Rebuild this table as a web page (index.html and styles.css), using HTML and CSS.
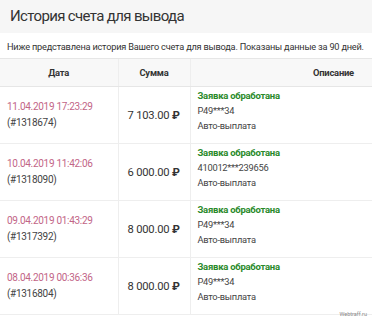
FILE: index.html
```html
<!DOCTYPE html>
<html lang="ru">
<head>
<meta charset="utf-8">
<link rel="stylesheet" href="styles.css">
</head>
<body>
<div class="page">
  <header class="head"><h1 class="title">История счета для вывода</h1></header>
  <p class="lead">Ниже представлена история Вашего счета для вывода. Показаны данные за 90 дней.</p>
  <table class="hist">
    <thead>
      <tr><th class="c-date">Дата</th><th class="c-sum">Сумма</th><th class="c-desc">Описание</th></tr>
    </thead>
    <tbody>
      <tr>
        <td class="c-date"><span class="dt">11.04.2019 17:23:29</span><span class="id">(#1318674)</span></td>
        <td class="c-sum">7 103.00 <span class="rub">₽</span></td>
        <td class="c-desc"><span class="ok">Заявка обработана</span><span class="ln">P49***34</span><span class="ln">Авто-выплата</span></td>
      </tr>
      <tr>
        <td class="c-date"><span class="dt">10.04.2019 11:42:06</span><span class="id">(#1318090)</span></td>
        <td class="c-sum">6 000.00 <span class="rub">₽</span></td>
        <td class="c-desc"><span class="ok">Заявка обработана</span><span class="ln">410012***239656</span><span class="ln">Авто-выплата</span></td>
      </tr>
      <tr>
        <td class="c-date"><span class="dt">09.04.2019 01:43:29</span><span class="id">(#1317392)</span></td>
        <td class="c-sum">8 000.00 <span class="rub">₽</span></td>
        <td class="c-desc"><span class="ok">Заявка обработана</span><span class="ln">P49***34</span><span class="ln">Авто-выплата</span></td>
      </tr>
      <tr>
        <td class="c-date"><span class="dt">08.04.2019 00:36:36</span><span class="id">(#1316804)</span></td>
        <td class="c-sum">8 000.00 <span class="rub">₽</span></td>
        <td class="c-desc"><span class="ok">Заявка обработана</span><span class="ln">P49***34</span><span class="ln">Авто-выплата</span></td>
      </tr>
    </tbody>
  </table>
  <div class="mark">Webtraff.ru</div>
</div>
</body>
</html>
```
FILE: styles.css
```css
* { box-sizing: border-box; }
html, body { margin: 0; padding: 0; background: #fff; }
body {
  font-family: Roboto, "Open Sans", sans-serif;
  color: #333;
  width: 372px;
  height: 320px;
  overflow: hidden;
}
.page { position: relative; height: 320px; }
.head {
  background: #f6f6f6;
  height: 33px;
  padding: 4px 0 0 10px;
}
.title {
  margin: 0;
  font-weight: 400;
  font-size: 15px;
  letter-spacing: -0.65px;
  color: #333;
  line-height: 24px;
}
.lead {
  margin: 0;
  padding: 7px 0 0 7px;
  height: 25px;
  font-size: 9.2px;
  letter-spacing: -0.2px;
  color: #333;
  line-height: 14px;
  white-space: nowrap;
}
.hist {
  width: 100%;
  border-collapse: collapse;
  font-size: 10px;
  letter-spacing: -0.3px;
}
.hist th {
  background: #f8f8f8;
  border-top: 1px solid #e6e6e6;
  border-bottom: 1px solid #e6e6e6;
  height: 28px;
  font-weight: 700;
  font-size: 9.4px;
  letter-spacing: -0.2px;
  color: #333;
  padding: 0;
}
.hist td {
  height: 57px;
  border-bottom: 1px solid #eee;
  padding: 0;
  vertical-align: middle;
}
.hist .c-date { width: 118px; padding-left: 7px; text-align: left; }
.hist th.c-date { text-align: center; padding-left: 0; }
.hist .c-sum { width: 72px; border-left: 1px solid #eee; padding-left: 9px; }
.hist th.c-sum { text-align: center; padding-left: 0; }
.hist .c-desc { border-left: 1px solid #eee; padding: 0 0 9px 7px; }
.hist th.c-desc { text-align: right; padding: 0 18px 0 0; }
.dt, .id, .ok, .ln { display: block; white-space: nowrap; }
.dt { color: #c26587; line-height: 16px; }
.id { color: #444; line-height: 16px; }
.ok { color: #2a8a2a; font-weight: 700; font-size: 9.5px; letter-spacing: -0.25px; line-height: 15px; }
.ln { color: #444; font-size: 9.3px; letter-spacing: -0.25px; line-height: 15px; }
.hist .c-sum { font-size: 11.2px; letter-spacing: -0.2px; color: #333; }
.hist th.c-sum { font-size: 9.4px; }
.rub { font-weight: 700; }
.mark {
  position: absolute;
  right: 5px;
  bottom: 3px;
  font-size: 5.5px;
  letter-spacing: 0;
  color: #888;
}
```
